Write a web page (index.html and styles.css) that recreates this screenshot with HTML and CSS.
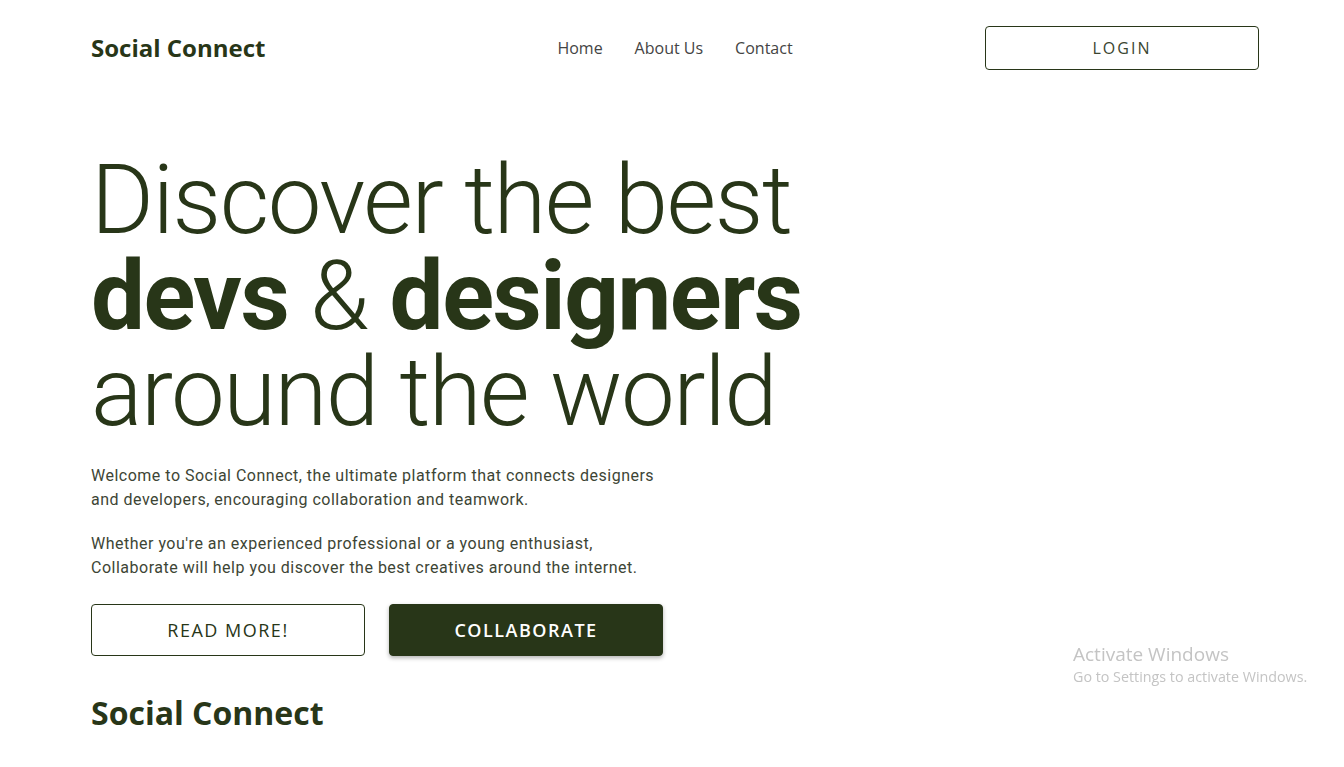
FILE: index.html
```html
<!DOCTYPE html>
<html lang="en">
<head>
<meta charset="utf-8">
<title>Social Connect</title>
<link rel="stylesheet" href="styles.css">
</head>
<body>
<div class="page">
  <header class="header">
    <div class="logo">Social Connect</div>
    <nav class="nav">
      <a href="#">Home</a>
      <a href="#">About Us</a>
      <a href="#">Contact</a>
    </nav>
    <div class="header-end">
      <button class="btn btn-outline btn-login">LOGIN</button>
    </div>
  </header>

  <main class="hero">
    <h1 class="hero-title"><span class="line">Discover the best</span><span class="line"><strong>devs</strong> &amp; <strong>designers</strong></span><span class="line">around the world</span></h1>
    <p class="hero-text">Welcome to Social Connect, the ultimate platform that connects designers<br>and developers, encouraging collaboration and teamwork.</p>
    <p class="hero-text">Whether you're an experienced professional or a young enthusiast,<br>Collaborate will help you discover the best creatives around the internet.</p>
    <div class="actions">
      <button class="btn btn-outline btn-big">READ MORE!</button>
      <button class="btn btn-solid btn-big">COLLABORATE</button>
    </div>
    <h2 class="section-title">Social Connect</h2>
  </main>
</div>
<div class="watermark">
  <div class="wm-title">Activate Windows</div>
  <div class="wm-sub">Go to Settings to activate Windows.</div>
</div>
</body>
</html>
```

FILE: styles.css
```css
* { box-sizing: border-box; }

html, body {
  margin: 0;
  padding: 0;
  background: #ffffff;
}

body {
  font-family: "Open Sans", "Liberation Sans", sans-serif;
  color: #283618;
  overflow: hidden;
}

.page {
  width: 1168px;
  margin-left: 91px;
}

.header {
  display: grid;
  grid-template-columns: 1fr auto 1fr;
  align-items: center;
  padding-top: 26px;
}

.logo {
  font-family: "Open Sans", sans-serif;
  font-weight: 700;
  font-size: 24px;
  line-height: 30px;
  color: #283618;
}

.nav {
  display: flex;
  gap: 32px;
}

.nav a {
  font-family: "Open Sans", sans-serif;
  font-size: 16px;
  color: #444444;
  text-decoration: none;
}

.header-end {
  display: flex;
  justify-content: flex-end;
}

.btn {
  font-family: "Open Sans", sans-serif;
  border-radius: 4px;
  cursor: pointer;
  width: 274px;
  padding: 0;
}

.btn-outline {
  background: #ffffff;
  border: 1px solid #283618;
  color: #283618;
}

.btn-login {
  height: 44px;
  font-size: 16px;
  letter-spacing: 2px;
  color: #3a4530;
}

.hero {
  padding-top: 82px;
}

.hero-title {
  margin: 0;
  display: flex;
  flex-direction: column;
  font-family: Roboto, "Liberation Sans", sans-serif;
  font-weight: 300;
  font-size: 96px;
  line-height: 96px;
  color: #283618;
  letter-spacing: -1.5px;
}

.hero-title .line {
  display: block;
  height: 96px;
}

.hero-title strong {
  font-weight: 700;
}

.hero-text {
  font-family: Roboto, "Liberation Sans", sans-serif;
  font-size: 16px;
  line-height: 24px;
  letter-spacing: 0.5px;
  color: #3d4535;
  margin: 0 0 20px;
}

.hero-title + .hero-text {
  margin-top: 24px;
}

.actions {
  display: flex;
  gap: 24px;
  margin-top: 24px;
}

.btn-big {
  height: 52px;
  font-size: 18px;
  letter-spacing: 1.5px;
}

.btn-solid {
  background: #283618;
  border: 1px solid #283618;
  color: #ffffff;
  font-weight: 600;
  box-shadow: 0 2px 4px rgba(0, 0, 0, 0.3);
}

.section-title {
  margin: 35px 0 0;
  font-family: "Open Sans", sans-serif;
  font-weight: 700;
  font-size: 32px;
  color: #283618;
}

.watermark {
  position: fixed;
  left: 1073px;
  top: 641px;
  font-family: "Open Sans", "Noto Sans", sans-serif;
  color: #c4c4c4;
}

.wm-title {
  font-size: 19px;
  line-height: 26px;
}

.wm-sub {
  font-size: 14.3px;
  line-height: 20px;
}
```
